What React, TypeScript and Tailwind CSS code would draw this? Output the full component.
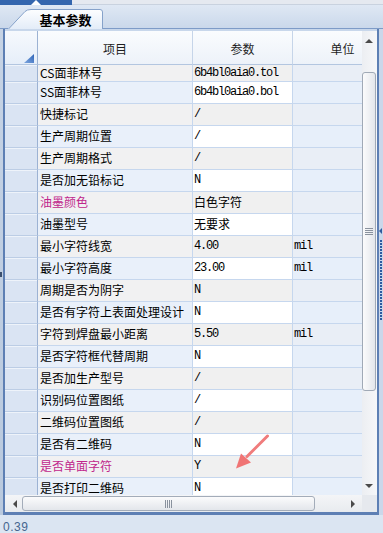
type Row = {
  name: string;
  value: string;
  unit?: string;
  cjk?: boolean;
  pink?: boolean;
};

const rows: Row[] = [
  { name: "CS面菲林号", value: "6b4bl0aia0.tol" },
  { name: "SS面菲林号", value: "6b4bl0aia0.bol" },
  { name: "快捷标记", value: "/" },
  { name: "生产周期位置", value: "/" },
  { name: "生产周期格式", value: "/" },
  { name: "是否加无铅标记", value: "N" },
  { name: "油墨颜色", value: "白色字符", cjk: true, pink: true },
  { name: "油墨型号", value: "无要求", cjk: true },
  { name: "最小字符线宽", value: "4.00", unit: "mil" },
  { name: "最小字符高度", value: "23.00", unit: "mil" },
  { name: "周期是否为阴字", value: "N" },
  { name: "是否有字符上表面处理设计", value: "N" },
  { name: "字符到焊盘最小距离", value: "5.50", unit: "mil" },
  { name: "是否字符框代替周期", value: "N" },
  { name: "是否加生产型号", value: "/" },
  { name: "识别码位置图纸", value: "/" },
  { name: "二维码位置图纸", value: "/" },
  { name: "是否有二维码", value: "N" },
  { name: "是否单面字符", value: "Y", pink: true },
  { name: "是否打印二维码", value: "N" },
];

const cjk = "font-['Noto_Sans_CJK_SC',sans-serif] text-[12px] leading-[14px]";
const mono = "font-['Liberation_Mono',monospace] text-[12px] leading-[14px] tracking-[-1.2px]";

function GridRow({ row, alt, first }: { row: Row; alt: boolean; first: boolean }) {
  const h = first ? "h-[17px]" : "h-[22px] pb-px";
  return (
    <div className={`flex shrink-0 ${first ? "h-[17px]" : "h-[22px]"}`}>
      <div className="w-[33px] shrink-0 bg-[#dae4f3] border-b border-r border-b-[#bccde5] border-r-[#9cb2d3] shadow-[inset_0_1px_0_#eef3fa]" />
      <div
        className={`w-[155px] shrink-0 flex items-center pl-[2px] ${h} border-b border-r border-[#c6d7ee] whitespace-nowrap ${cjk} ${
          alt ? "bg-[#f1f1f2]" : "bg-[#e9f0fa]"
        } ${row.pink ? "text-[#c0268c]" : "text-black"}`}
      >
        {row.name}
      </div>
      <div
        className={`w-[100px] shrink-0 flex items-center pl-px ${h} border-b border-r border-[#c6d7ee] text-black whitespace-nowrap ${
          row.cjk ? cjk : mono
        } ${alt ? "bg-[#f0f0f0]" : "bg-white"}`}
      >
        {row.value}
      </div>
      <div
        className={`w-[100px] shrink-0 flex items-center pl-px ${h} border-b border-r border-[#c6d7ee] text-black ${mono} ${
          alt ? "bg-[#e9eef6]" : "bg-[#e7effa]"
        }`}
      >
        {row.unit ?? ""}
      </div>
    </div>
  );
}

export default function App() {
  return (
    <div className="relative w-[383px] h-[533px] overflow-hidden flex flex-col bg-[#d6e1f0] font-['Noto_Sans_CJK_SC',sans-serif]">
      {/* top strip */}
      <div className="flex h-[5px] shrink-0">
        <div className="w-[72px] bg-[#3466ae] flex justify-center">
          <svg width="10" height="5" viewBox="0 0 10 5">
            <polygon points="5,0 10,5 0,5" fill="#ffffff" />
          </svg>
        </div>
        <div className="flex-1 bg-[#e5e9f0] border-b border-[#c9d2df]" />
      </div>

      {/* tab row */}
      <div className="flex h-[24px] shrink-0 items-end bg-linear-to-b from-[#dfe8f4] to-[#c9d7ea]">
        <div className="w-[8px] h-px bg-[#7e9bc7]" />
        <div className="relative w-[95px] h-[20px] flex items-center justify-center pl-[20px] pt-px">
          <svg className="absolute inset-0" width="95" height="20" viewBox="0 0 95 20">
            <defs>
              <linearGradient id="tabg" x1="0" y1="0" x2="0" y2="1">
                <stop offset="0" stopColor="#fdfeff" />
                <stop offset="1" stopColor="#e3ecf8" />
              </linearGradient>
            </defs>
            <path d="M0.5,20 L17,2.5 Q19,0.5 23,0.5 L92,0.5 Q94.5,0.5 94.5,3 L94.5,20 Z" fill="url(#tabg)" />
            <path d="M0.5,20 L17,2.5 Q19,0.5 23,0.5 L92,0.5 Q94.5,0.5 94.5,3 L94.5,20" fill="none" stroke="#86a2ca" />
          </svg>
          <span className="relative text-[13px] leading-[14px] font-bold text-black">基本参数</span>
        </div>
        <div className="flex-1 h-px bg-[#7e9bc7]" />
      </div>

      {/* body */}
      <div className="flex h-[486px] shrink-0">
        <div className="w-[3px] flex flex-col bg-linear-to-b from-[#c6d3e5] to-[#b9c9de]">
          <div className="h-[243px]" />
          <div className="h-[5px] w-[2px] bg-[#3b4f6e]" />
        </div>
        <div className="flex border-l-2 border-b-[3px] border-r-2 border-[#5d7fb4]">
          {/* left part: header, rows, hscroll */}
          <div className="w-[357px] flex flex-col">
            <div className="h-[2px] bg-[#c8d7eb]" />
            <div className="flex h-[34px] shrink-0 overflow-hidden">
              <div className="w-[33px] shrink-0 flex items-end justify-end pr-[3px] pb-px bg-linear-to-b from-[#f6f9fd] to-[#e6eef9] border-b border-r border-b-[#b3c6e0] border-r-[#9cb2d3]">
                <svg width="10" height="9" viewBox="0 0 10 9">
                  <defs>
                    <linearGradient id="trig" x1="0" y1="1" x2="1" y2="0">
                      <stop offset="0" stopColor="#7ea6de" />
                      <stop offset="1" stopColor="#2f64b8" />
                    </linearGradient>
                  </defs>
                  <polygon points="0,9 10,0 10,9" fill="url(#trig)" />
                </svg>
              </div>
              {["项目", "参数", "单位"].map((h, i) => (
                <div
                  key={h}
                  className={`${i === 0 ? "w-[155px]" : "w-[100px]"} shrink-0 flex items-center justify-center pt-[2px] text-[12px] text-[#1e1e1e] bg-linear-to-b from-[#fafcfe] to-[#edf2f9] border-b border-r border-b-[#b3c6e0] border-r-[#c6d5e9]`}
                >
                  {h}
                </div>
              ))}
            </div>
            <div className="h-[430px] shrink-0 overflow-hidden">
              {rows.map((r, i) => (
                <GridRow key={r.name} row={r} alt={i % 2 === 0} first={i === 0} />
              ))}
            </div>
            {/* horizontal scrollbar */}
            <div className="h-[17px] shrink-0 flex items-center bg-linear-to-b from-[#f4f5f7] to-[#e8ebef]">
              <div className="w-[17px] h-full flex items-center justify-center pl-[2px]">
                <svg width="4" height="8" viewBox="0 0 4 8">
                  <polygon points="4,0 4,8 0,4" fill="#4a4a4a" />
                </svg>
              </div>
              <div className="w-[293px] h-[15px] rounded-[3px] border border-[#a3acb9] bg-linear-to-b from-[#fbfbfc] to-[#e3e6eb] flex items-center justify-center">
                <div className="flex gap-px">
                  <div className="w-px h-[8px] bg-[#8a929e]" />
                  <div className="w-px h-[8px] bg-[#8a929e]" />
                  <div className="w-px h-[8px] bg-[#8a929e]" />
                  <div className="w-px h-[8px] bg-[#8a929e]" />
                </div>
              </div>
              <div className="flex-1" />
              <div className="w-[18px] h-full flex items-center justify-center">
                <svg width="4" height="8" viewBox="0 0 4 8">
                  <polygon points="0,0 4,4 0,8" fill="#4a4a4a" />
                </svg>
              </div>
            </div>
          </div>
          {/* vertical scrollbar */}
          <div className="w-[15px] flex flex-col">
            <div className="h-[2px] bg-[#c8d7eb]" />
            <div className="h-[464px] flex flex-col bg-linear-to-r from-[#eceef2] to-[#f6f7f9]">
              <div className="h-[20px] flex items-center justify-center pr-px">
                <svg width="8" height="4" viewBox="0 0 8 4">
                  <polygon points="4,0 8,4 0,4" fill="#4a4a4a" />
                </svg>
              </div>
              <div className="flex-1 pt-[21px]">
                <div className="w-[14px] h-[319px] rounded-[3px] border border-[#a0a9b6] bg-linear-to-r from-[#fbfbfc] to-[#e3e6eb] flex items-center justify-center">
                  <div className="flex flex-col gap-px">
                    <div className="w-[8px] h-px bg-[#8a929e]" />
                    <div className="w-[8px] h-px bg-[#8a929e]" />
                    <div className="w-[8px] h-px bg-[#8a929e]" />
                    <div className="w-[8px] h-px bg-[#8a929e]" />
                  </div>
                </div>
              </div>
              <div className="h-[18px] flex items-center justify-center pr-px">
                <svg width="8" height="4" viewBox="0 0 8 4">
                  <polygon points="0,0 8,0 4,4" fill="#4a4a4a" />
                </svg>
              </div>
            </div>
            <div className="h-[17px] bg-[#e6e9ee]" />
          </div>
        </div>
        {/* right splitter */}
        <div className="w-[4px] flex flex-col items-center bg-[#cad7ea]">
          <div className="h-[199px]" />
          <svg width="4" height="6" viewBox="0 0 4 6">
            <polygon points="3,0 3,6 0,3" fill="#2f5a9c" />
          </svg>
          <div className="h-[6px]" />
          <div className="w-[2px] h-[80px] bg-[repeating-linear-gradient(to_bottom,#2c5aa0_0px,#2c5aa0_2px,transparent_2px,transparent_3px)]" />
        </div>
      </div>

      {/* status line */}
      <div className="flex-1 bg-[#dbe5f2] pl-[3px] pt-[5px] font-['Liberation_Sans',sans-serif] text-[12px] leading-[14px] tracking-[0.5px] text-[#46668f]">
        0.39
      </div>

      {/* annotation arrow */}
      <svg className="absolute left-0 top-0 pointer-events-none" width="383" height="533" viewBox="0 0 383 533">
        <line x1="267.5" y1="436" x2="247" y2="456.5" stroke="#f07c7c" strokeWidth="3" strokeLinecap="round" />
        <polygon points="236,468.5 241,453.5 251,462.5" fill="#f07474" />
      </svg>
    </div>
  );
}
